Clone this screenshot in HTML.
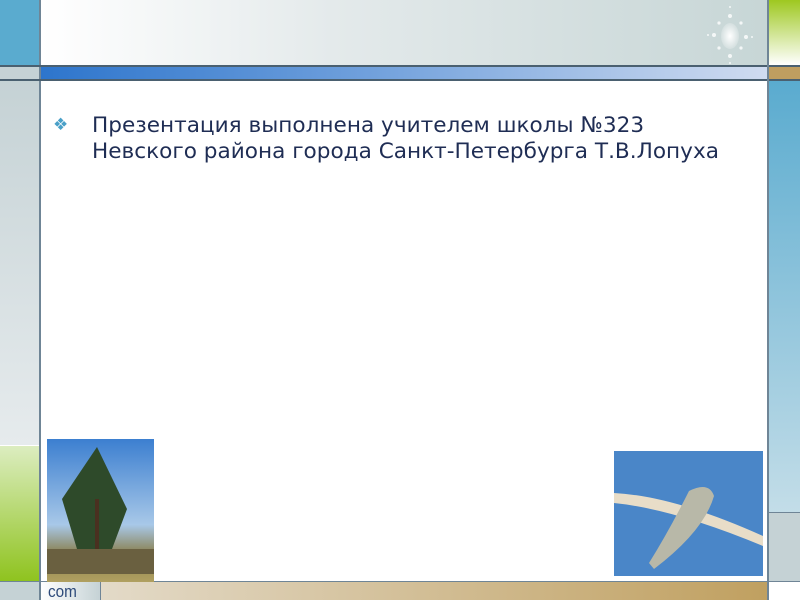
<!DOCTYPE html>
<html><head><meta charset="utf-8"><style>
body{margin:0;width:800px;height:600px;overflow:hidden;position:relative;background:#fff;font-family:"DejaVu Sans","Liberation Sans",sans-serif}
div{position:absolute}
</style></head><body>
<div style="left:0;top:0;width:39px;height:66px;background:#5aabcf"></div>
<div style="left:0;top:67px;width:39px;height:13px;background:#c5d2d5"></div>
<div style="left:0;top:81px;width:39px;height:364px;background:linear-gradient(#c5d2d5,#e6ebed)"></div>
<div style="left:0;top:446px;width:39px;height:135px;background:linear-gradient(#dcedc0,#8fc31f)"></div>
<div style="left:0;top:582px;width:39px;height:18px;background:#c5d2d5"></div>
<div style="left:39px;top:0;width:2px;height:600px;background:#6f8596"></div>
<div style="left:41px;top:0;width:726px;height:65px;background:linear-gradient(90deg,#fff,#e4eaeb 40%,#c7d6d6)"></div>
<svg style="position:absolute;left:700px;top:2px" width="66" height="64"><defs><radialGradient id="g"><stop offset="0" stop-color="#fff"/><stop offset="1" stop-color="#fff" stop-opacity=".2"/></radialGradient></defs><ellipse cx="30" cy="34" rx="9" ry="13" fill="url(#g)"/><g fill="#fff" opacity=".8"><circle cx="30" cy="14" r="2"/><circle cx="30" cy="5" r="1"/><circle cx="30" cy="54" r="2"/><circle cx="30" cy="61" r="1"/><circle cx="14" cy="33" r="2"/><circle cx="8" cy="33" r="1"/><circle cx="46" cy="35" r="2"/><circle cx="52" cy="35" r="1"/><circle cx="19" cy="21" r="1.6"/><circle cx="41" cy="21" r="1.6"/><circle cx="19" cy="46" r="1.6"/><circle cx="41" cy="46" r="1.6"/></g></svg>
<div style="left:0;top:65px;width:800px;height:2px;background:#4a6070"></div>
<div style="left:41px;top:67px;width:726px;height:12px;background:linear-gradient(90deg,#2d75cc,#70a0dc 45%,#d0dcf0)"></div>
<div style="left:0;top:79px;width:800px;height:2px;background:#4a6070"></div>
<div style="left:767px;top:0;width:2px;height:600px;background:#6f8596"></div>
<div style="left:769px;top:0;width:31px;height:65px;background:linear-gradient(#9ec820,#fff)"></div>
<div style="left:769px;top:67px;width:31px;height:12px;background:#bf9e60"></div>
<div style="left:769px;top:81px;width:31px;height:431px;background:linear-gradient(#5aabcf,#c3dde8)"></div>
<div style="left:769px;top:512px;width:31px;height:1px;background:#6f8596"></div>
<div style="left:769px;top:513px;width:31px;height:68px;background:#c5d2d5"></div>
<div style="left:0;top:581px;width:800px;height:1px;background:#6f8596"></div>
<div style="left:41px;top:582px;width:59px;height:18px;background:linear-gradient(90deg,#fff,#c5d2d5)"></div>
<div style="left:100px;top:582px;width:1px;height:18px;background:#6f8596"></div>
<div style="left:101px;top:582px;width:666px;height:18px;background:linear-gradient(90deg,#e3dac8,#c0a060)"></div>
<div style="left:769px;top:582px;width:31px;height:18px;background:#fff"></div>
<div style="left:48px;top:582px;font-family:'Liberation Sans',sans-serif;font-size:17px;color:#2d4a7a;transform:scaleX(.9);transform-origin:left">com</div>
<div style="left:53px;top:115px;color:#4aa0c8;font-size:17px">❖</div>
<div style="left:92px;top:113px;font-size:21.6px;line-height:26px;color:#1f2d54;white-space:nowrap">Презентация выполнена учителем школы №323<br>Невского района города Санкт-Петербурга Т.В.Лопуха</div>
<div style="left:47px;top:439px;width:107px;height:143px;background:linear-gradient(#3c7fd0,#a8c8e8 60%,#8a8050 80%,#b0a060)"></div>
<svg style="position:absolute;left:47px;top:439px" width="107" height="143"><path d="M50 8 L80 70 L65 110 L30 110 L15 60Z" fill="#2e4a2a"/><rect x="48" y="60" width="4" height="70" fill="#4a3020"/><rect x="0" y="110" width="107" height="25" fill="#6a6040"/></svg>
<div style="left:614px;top:451px;width:149px;height:125px;background:#4a86c8"></div>
<svg style="position:absolute;left:614px;top:451px" width="149" height="125"><path d="M0 42 Q60 45 149 85 L149 95 Q60 58 0 52Z" fill="#e8ddc8"/><path d="M75 40 Q95 30 100 45 Q90 80 40 118 L35 112 Q55 80 75 40Z" fill="#b8b8a8"/></svg>
</body></html>
